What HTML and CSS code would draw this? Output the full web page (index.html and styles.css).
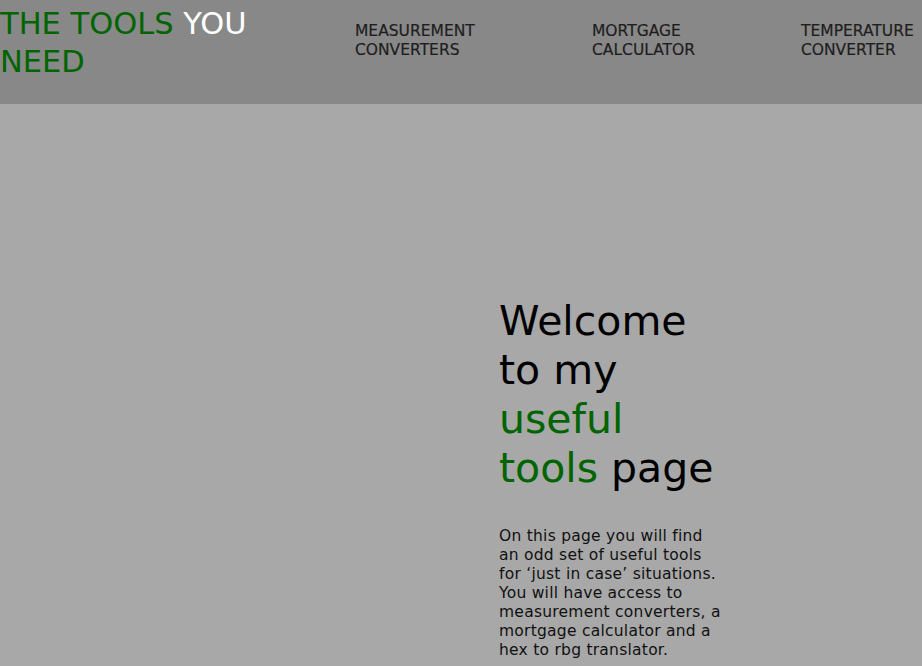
FILE: index.html
```html
<!DOCTYPE html>
<html lang="en">
<head>
<meta charset="utf-8">
<title>The Tools You Need</title>
<link rel="stylesheet" href="styles.css">
</head>
<body>
<header class="site-header">
  <div class="logo"><span class="green">THE TOOLS</span> <span class="white">YOU</span> <span class="green">NEED</span></div>
  <nav class="nav">
    <a class="nav-link" href="#">MEASUREMENT CONVERTERS</a>
    <a class="nav-link" href="#">MORTGAGE CALCULATOR</a>
    <a class="nav-link" href="#">TEMPERATURE CONVERTER</a>
  </nav>
</header>
<main class="hero">
  <div class="hero-left"></div>
  <div class="hero-text">
    <h1 class="title">Welcome to my <span class="green">useful tools</span> page</h1>
    <p class="intro">On this page you will find an odd set of useful tools for ‘just in case’ situations. You will have access to measurement converters, a mortgage calculator and a hex to rbg translator.</p>
  </div>
</main>
</body>
</html>
```
FILE: styles.css
```css
html, body {
  margin: 0;
  padding: 0;
}
body {
  background: #a8a8a8;
  font-family: "DejaVu Sans", sans-serif;
  min-height: 666px;
}
.site-header {
  background: #888888;
  height: 104px;
  display: grid;
  grid-template-columns: 355px 237px 209px 1fr;
  align-items: start;
}
.logo {
  font-size: 30.5px;
  line-height: 38px;
  padding-top: 5px;
  width: 255px;
}
.green { color: #006400; }
.white { color: #ffffff; }
.nav {
  display: contents;
}
.nav-link {
  color: #1e1e1e;
  text-decoration: none;
  font-size: 15.5px;
  line-height: 19px;
  padding-top: 22px;
  -webkit-text-stroke: 0.2px #1e1e1e;
}
.nav-link:nth-child(1) { width: 132px; }
.nav-link:nth-child(2) { width: 115px; }
.nav-link:nth-child(3) { width: 121px; }
.hero {
  display: grid;
  grid-template-columns: 499px 224px;
}
.hero-text {
  padding-top: 193px;
}
.title {
  margin: 0;
  font-weight: normal;
  font-size: 41px;
  line-height: 49px;
  color: #000000;
}
.intro {
  margin: 34px 0 0;
  font-size: 15.5px;
  line-height: 19px;
  letter-spacing: 0.25px;
  color: #111111;
}
```
